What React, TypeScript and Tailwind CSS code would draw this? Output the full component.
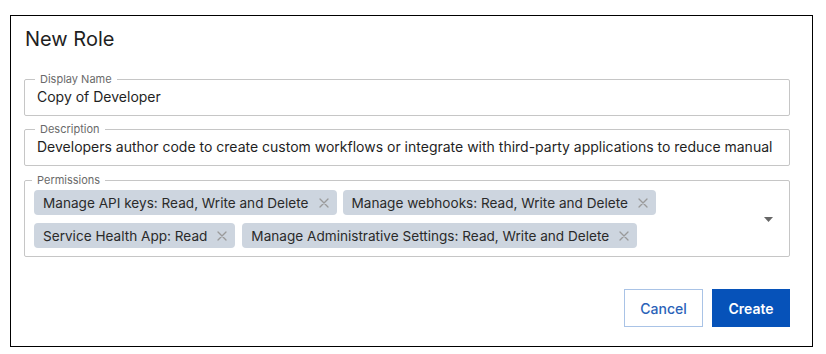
import React from "react";

const chipsRow1 = ["Manage API keys: Read, Write and Delete", "Manage webhooks: Read, Write and Delete"];
const chipsRow2 = ["Service Health App: Read", "Manage Administrative Settings: Read, Write and Delete"];

function XIcon() {
  return (
    <svg width="10" height="10" viewBox="0 0 10 10" className="shrink-0">
      <path d="M1 1 L9 9 M9 1 L1 9" stroke="#9a9a9a" strokeWidth="1.3" strokeLinecap="round" />
    </svg>
  );
}

function Chip({ label }: { label: string }) {
  return (
    <div className="flex h-[25px] items-center gap-[10px] rounded-[4px] bg-[#cdd5df] pl-[9px] pr-[8px] text-[13.6px] leading-[20px] text-[#2a2a2a]">
      <span className="whitespace-nowrap">{label}</span>
      <XIcon />
    </div>
  );
}

function Field({ label, children, className = "" }: { label: string; children: React.ReactNode; className?: string }) {
  return (
    <fieldset className={`rounded-[2px] border border-[#c6c6c6] px-[12px] ${className}`}>
      <legend className="-ml-[2px] px-[5px] text-[11px] leading-[12px] text-[#6a6a6a]">{label}</legend>
      {children}
    </fieldset>
  );
}

export default function App() {
  return (
    <div className="bg-white" style={{ fontFamily: "Inter, 'Noto Sans', sans-serif" }}>
      <div className="pl-[10px] pt-[15px]">
        <div className="flex h-[332px] w-[803px] flex-col border border-black pl-[13px] pr-[22px]">
          <h1 className="ml-[1px] mt-[11px] text-[20px] font-normal leading-[24px] text-[#1f1f1f]">New Role</h1>

          <Field label="Display Name" className="mt-[22px]">
            <div className="pb-[8px] pt-[2px] text-[14px] leading-[20px] text-[#1f1f1f]">Copy of Developer</div>
          </Field>

          <Field label="Description" className="mt-[7px]">
            <div className="overflow-hidden whitespace-nowrap pb-[8px] pt-[2px] text-[14px] leading-[20px] text-[#1f1f1f]">
              Developers author code to create custom workflows or integrate with third-party applications to reduce manual
            </div>
          </Field>

          <Field label="Permissions" className="mt-[8px] !pl-[9px] !pr-[16px]">
            <div className="flex items-center pb-[8px] pt-[4px]">
              <div className="flex flex-1 flex-col gap-[8px]">
                <div className="flex gap-[6px]">
                  {chipsRow1.map((c) => (
                    <Chip key={c} label={c} />
                  ))}
                </div>
                <div className="flex gap-[7px]">
                  {chipsRow2.map((c) => (
                    <Chip key={c} label={c} />
                  ))}
                </div>
              </div>
              <svg width="9" height="5" viewBox="0 0 9 5" className="ml-2">
                <path d="M0 0 L9 0 L4.5 5 Z" fill="#666" />
              </svg>
            </div>
          </Field>

          <div className="mt-[32px] flex justify-end gap-[9px]">
            <button className="flex h-[38px] w-[79px] items-center justify-center border border-[#a9c3e6] bg-white text-[14px] font-medium text-[#2a62b8]">
              Cancel
            </button>
            <button className="flex h-[38px] w-[78px] items-center justify-center bg-[#0652b9] text-[14px] font-semibold text-white">
              Create
            </button>
          </div>
        </div>
      </div>
    </div>
  );
}
